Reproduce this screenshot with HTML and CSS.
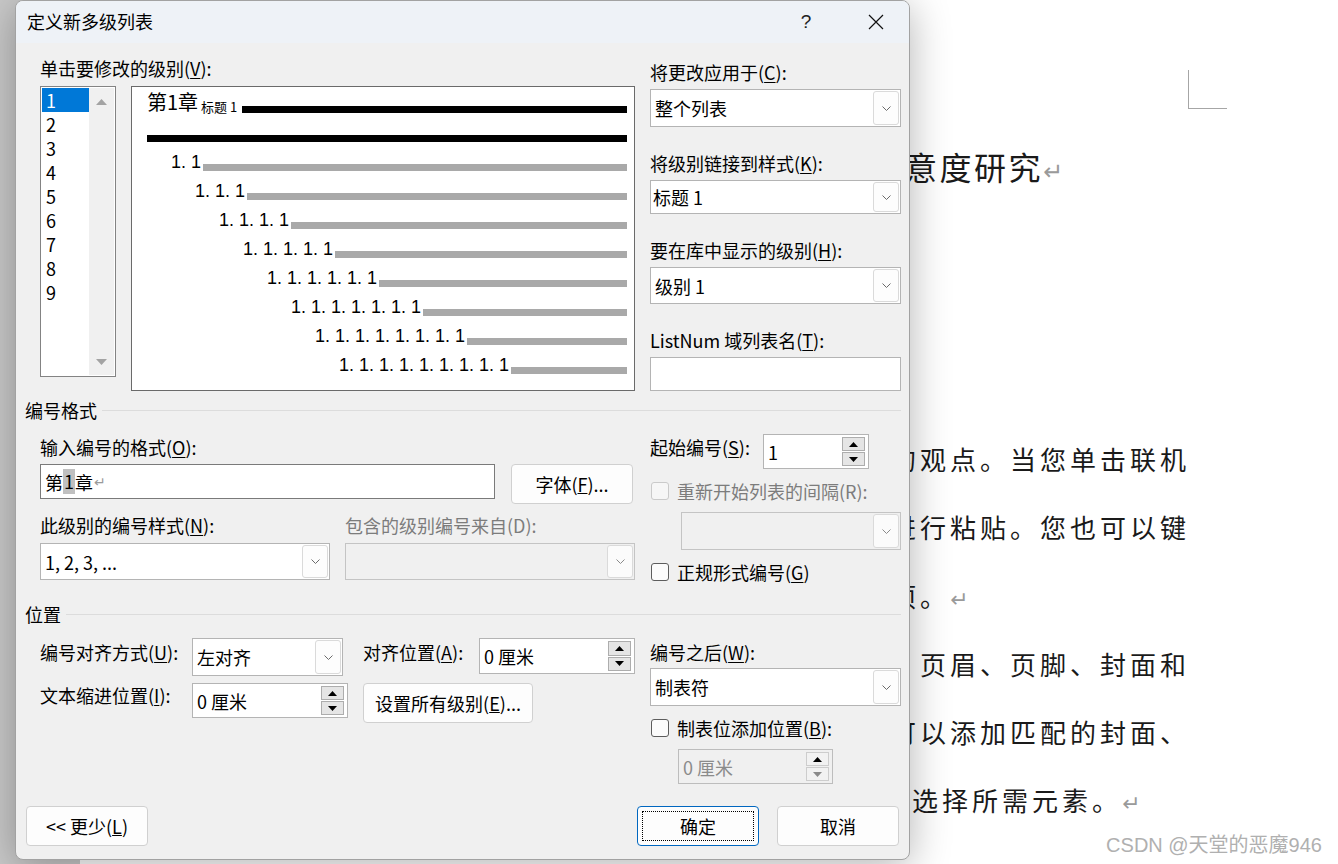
FILE: index.html
```html
<!DOCTYPE html>
<html lang="zh-CN">
<head>
<meta charset="utf-8">
<title>定义新多级列表</title>
<link rel="stylesheet" href="styles.css">
</head>
<body>
<div class="word">
  <div class="canvas"></div>
  <div class="page">
    <div class="corner"></div>
    <div class="doc-title">意度研究<span class="pilcrow">↵</span></div>
    <div class="doc-lines">
      <div class="doc-line">的观点。当您单击联机</div>
      <div class="doc-line">进行粘贴。您也可以键</div>
      <div class="doc-line">项。<span class="pilcrow">↵</span></div>
      <div class="doc-line">，页眉、页脚、封面和</div>
      <div class="doc-line">可以添加匹配的封面、</div>
      <div class="doc-line shift">选择所需元素。<span class="pilcrow">↵</span></div>
    </div>
  </div>
</div>
<div class="watermark">CSDN @天堂的恶魔946</div>

<div class="dialog">
  <div class="titlebar">
    <span class="title">定义新多级列表</span>
    <span class="tb-btn help">?</span>
    <span class="tb-btn close"><svg width="16" height="16" viewBox="0 0 16 16"><path d="M1 1 L15 15 M15 1 L1 15" stroke="#111" stroke-width="1.2" fill="none"/></svg></span>
  </div>
  <div class="dbody">
    <div class="grid top">
      <div class="lcol">
        <div class="lbl">单击要修改的级别(<u>V</u>):</div>
        <div class="levels-row">
          <div class="listbox">
            <div class="items">
              <div class="item sel">1</div>
              <div class="item">2</div>
              <div class="item">3</div>
              <div class="item">4</div>
              <div class="item">5</div>
              <div class="item">6</div>
              <div class="item">7</div>
              <div class="item">8</div>
              <div class="item">9</div>
            </div>
            <div class="vscroll">
              <svg width="11" height="6" viewBox="0 0 11 6"><polygon points="0,6 5.5,0 11,6" fill="#a3a3a3"/></svg>
              <svg width="11" height="6" viewBox="0 0 11 6"><polygon points="0,0 5.5,6 11,0" fill="#a3a3a3"/></svg>
            </div>
          </div>
          <div class="preview">
            <div class="prow"><span class="ch">第1章</span><span class="sm">标题 1</span><span class="bar black"></span></div>
            <div class="prow"><span class="bar black"></span></div>
            <div class="prow l2"><span class="num">1. 1</span><span class="bar gray"></span></div>
            <div class="prow l3"><span class="num">1. 1. 1</span><span class="bar gray"></span></div>
            <div class="prow l4"><span class="num">1. 1. 1. 1</span><span class="bar gray"></span></div>
            <div class="prow l5"><span class="num">1. 1. 1. 1. 1</span><span class="bar gray"></span></div>
            <div class="prow l6"><span class="num">1. 1. 1. 1. 1. 1</span><span class="bar gray"></span></div>
            <div class="prow l7"><span class="num">1. 1. 1. 1. 1. 1. 1</span><span class="bar gray"></span></div>
            <div class="prow l8"><span class="num">1. 1. 1. 1. 1. 1. 1. 1</span><span class="bar gray"></span></div>
            <div class="prow l9"><span class="num">1. 1. 1. 1. 1. 1. 1. 1. 1</span><span class="bar gray"></span></div>
          </div>
        </div>
      </div>
      <div class="rcol rtop">
        <div class="lbl">将更改应用于(<u>C</u>):</div>
        <div class="combo"><span class="txt">整个列表</span><span class="dd"><svg width="9" height="5" viewBox="0 0 9 5"><path d="M0.5 0.5 L4.5 4.5 L8.5 0.5" stroke="#6a6a6a" fill="none"/></svg></span></div>
        <div class="lbl gap">将级别链接到样式(<u>K</u>):</div>
        <div class="combo short edit"><span class="txt">标题 1</span><span class="dd"><svg width="9" height="5" viewBox="0 0 9 5"><path d="M0.5 0.5 L4.5 4.5 L8.5 0.5" stroke="#6a6a6a" fill="none"/></svg></span></div>
        <div class="lbl gap">要在库中显示的级别(<u>H</u>):</div>
        <div class="combo c37"><span class="txt">级别 1</span><span class="dd"><svg width="9" height="5" viewBox="0 0 9 5"><path d="M0.5 0.5 L4.5 4.5 L8.5 0.5" stroke="#6a6a6a" fill="none"/></svg></span></div>
        <div class="lbl gap">ListNum 域列表名(<u>T</u>):</div>
        <div class="textbox"></div>
      </div>
    </div>

    <div class="section sec1">编号格式</div>

    <div class="grid mid">
      <div class="lcol">
        <div class="lbl first">输入编号的格式(<u>O</u>):</div>
        <div class="row-input">
          <div class="fmt-input">第<span class="hl">1</span>章<span class="ret">↵</span></div>
          <button class="btn font-btn">字体(<u>F</u>)...</button>
        </div>
        <div class="row-labels">
          <div class="lbl w305">此级别的编号样式(<u>N</u>):</div>
          <div class="lbl dis">包含的级别编号来自(D):</div>
        </div>
        <div class="row-combos">
          <div class="combo w290 c37"><span class="txt">1, 2, 3, ...</span><span class="dd"><svg width="9" height="5" viewBox="0 0 9 5"><path d="M0.5 0.5 L4.5 4.5 L8.5 0.5" stroke="#6a6a6a" fill="none"/></svg></span></div>
          <div class="combo w290 c37 disabled"><span class="txt"></span><span class="dd"><svg width="9" height="5" viewBox="0 0 9 5"><path d="M0.5 0.5 L4.5 4.5 L8.5 0.5" stroke="#8a8a8a" fill="none"/></svg></span></div>
        </div>
      </div>
      <div class="rcol">
        <div class="spin-row">
          <div class="lbl start-lbl">起始编号(<u>S</u>):</div>
          <div class="spin start-spin"><span class="txt">1</span>
            <span class="arrows">
              <span class="abtn"><svg width="9" height="5" viewBox="0 0 9 5"><polygon points="0,5 4.5,0 9,5" fill="#000"/></svg></span>
              <span class="abtn"><svg width="9" height="5" viewBox="0 0 9 5"><polygon points="0,0 4.5,5 9,0" fill="#000"/></svg></span>
            </span>
          </div>
        </div>
        <div class="check-row"><span class="cb dis"></span><span class="lbl dis">重新开始列表的间隔(R):</span></div>
        <div class="combo restart disabled"><span class="txt"></span><span class="dd"><svg width="9" height="5" viewBox="0 0 9 5"><path d="M0.5 0.5 L4.5 4.5 L8.5 0.5" stroke="#8a8a8a" fill="none"/></svg></span></div>
        <div class="check-row"><span class="cb"></span><span class="lbl">正规形式编号(<u>G</u>)</span></div>
      </div>
    </div>

    <div class="section sec2">位置</div>

    <div class="grid bottom">
      <div class="lcol">
        <div class="pos-row1">
          <div class="lbl w152 nudge">编号对齐方式(<u>U</u>):</div>
          <div class="combo w151"><span class="txt">左对齐</span><span class="dd"><svg width="9" height="5" viewBox="0 0 9 5"><path d="M0.5 0.5 L4.5 4.5 L8.5 0.5" stroke="#6a6a6a" fill="none"/></svg></span></div>
          <div class="lbl align-lbl nudge">对齐位置(<u>A</u>):</div>
          <div class="spin w156 h36"><span class="txt">0 厘米</span>
            <span class="arrows">
              <span class="abtn"><svg width="9" height="5" viewBox="0 0 9 5"><polygon points="0,5 4.5,0 9,5" fill="#000"/></svg></span>
              <span class="abtn"><svg width="9" height="5" viewBox="0 0 9 5"><polygon points="0,0 4.5,5 9,0" fill="#000"/></svg></span>
            </span>
          </div>
        </div>
        <div class="pos-row2">
          <div class="lbl w152">文本缩进位置(<u>I</u>):</div>
          <div class="spin w156"><span class="txt">0 厘米</span>
            <span class="arrows">
              <span class="abtn"><svg width="9" height="5" viewBox="0 0 9 5"><polygon points="0,5 4.5,0 9,5" fill="#000"/></svg></span>
              <span class="abtn"><svg width="9" height="5" viewBox="0 0 9 5"><polygon points="0,0 4.5,5 9,0" fill="#000"/></svg></span>
            </span>
          </div>
          <button class="btn setall">设置所有级别(<u>E</u>)...</button>
        </div>
      </div>
      <div class="rcol">
        <div class="lbl nudge">编号之后(<u>W</u>):</div>
        <div class="combo after"><span class="txt">制表符</span><span class="dd"><svg width="9" height="5" viewBox="0 0 9 5"><path d="M0.5 0.5 L4.5 4.5 L8.5 0.5" stroke="#6a6a6a" fill="none"/></svg></span></div>
        <div class="check-row"><span class="cb"></span><span class="lbl">制表位添加位置(<u>B</u>):</span></div>
        <div class="spin tabpos disabled"><span class="txt">0 厘米</span>
          <span class="arrows">
            <span class="abtn"><svg width="9" height="5" viewBox="0 0 9 5"><polygon points="0,5 4.5,0 9,5" fill="#000"/></svg></span>
            <span class="abtn"><svg width="9" height="5" viewBox="0 0 9 5"><polygon points="0,0 4.5,5 9,0" fill="#8a8a8a"/></svg></span>
          </span>
        </div>
      </div>
    </div>

    <div class="btns">
      <button class="btn wide">&lt;&lt; 更少(<u>L</u>)</button>
      <button class="btn wide default push">确定</button>
      <button class="btn wide">取消</button>
    </div>
  </div>
</div>
</body>
</html>
```
FILE: styles.css
```css
* { box-sizing: border-box; }
html, body { margin: 0; padding: 0; }
body {
  width: 1338px;
  height: 864px;
  overflow: hidden;
  position: relative;
  background: #fff;
  color: #000;
  font-family: "Noto Sans CJK SC", sans-serif;
}

/* ---------- Word document in the background ---------- */
.word {
  display: grid;
  grid-template-columns: 80px 1fr;
  height: 864px;
}
.canvas { background: #c9c9c9; }
.page { background: #fff; padding-top: 70px; }
.corner {
  margin-left: 1108px;
  width: 39px;
  height: 39px;
  border-left: 1px solid #a6a6a6;
  border-bottom: 1px solid #a6a6a6;
}
.doc-title {
  margin-top: 37px;
  margin-left: 825px;
  font-size: 32px;
  line-height: 40px;
  letter-spacing: 2.5px;
  color: #1a1a1a;
  white-space: nowrap;
}
.pilcrow {
  color: #9a9a9a;
  font-family: "DejaVu Sans", sans-serif;
  font-size: 24px;
  line-height: 0;
  letter-spacing: 0;
}
.doc-lines {
  margin-top: 239px;
  margin-left: 810px;
  font-size: 26px;
  line-height: 68.3px;
  letter-spacing: 4px;
  color: #1a1a1a;
  white-space: nowrap;
}
.doc-lines .pilcrow { font-size: 22px; }
.doc-line.shift { padding-left: 22px; }
.watermark {
  position: absolute;
  right: 16px;
  bottom: 7px;
  font-family: "Liberation Sans", "Noto Sans CJK SC", sans-serif;
  font-size: 20px;
  line-height: 24px;
  color: #b0b0b0;
}

/* ---------- Dialog window ---------- */
.dialog {
  position: absolute;
  left: 15px;
  top: 0;
  width: 895px;
  height: 860px;
  background: #f0f0f0;
  border: 1px solid #a2a2a2;
  border-radius: 8px;
  box-shadow: 0 6px 40px rgba(0, 0, 0, 0.3);
  overflow: hidden;
  display: flex;
  flex-direction: column;
}
.titlebar {
  height: 42px;
  flex: none;
  background: #eef2f7;
  display: flex;
  align-items: center;
  padding: 0 10px 0 11px;
}
.title { font-size: 18px; line-height: 24px; margin-top: -2px; }
.tb-btn {
  width: 46px;
  display: flex;
  justify-content: center;
  align-items: center;
}
.help {
  margin-left: auto;
  margin-right: 24px;
  font-family: "Liberation Sans", sans-serif;
  font-size: 19px;
  color: #222;
}

.dbody {
  flex: 1;
  padding: 13px 8px 0 9px;
  display: flex;
  flex-direction: column;
  font-size: 18px;
}
.grid {
  display: grid;
  grid-template-columns: 610px 251px;
  column-gap: 15px;
  align-items: start;
}
.lcol { padding-left: 15px; }
.rcol { display: flex; flex-direction: column; align-items: flex-start; }
.rcol > .combo, .rcol > .textbox { align-self: stretch; }

.lbl { font-size: 18px; line-height: 24px; white-space: nowrap; }
.lbl u { text-underline-offset: 2px; }
.lbl.dis { color: #7c7c7c; }

/* top area */
.levels-row { display: flex; gap: 15px; margin-top: 6px; align-items: flex-start; }
.listbox {
  width: 76px;
  height: 291px;
  border: 1px solid #838383;
  background: #fff;
  display: flex;
  padding: 1px;
}
.items { width: 47px; }
.item { height: 24px; line-height: 24px; padding-left: 4px; font-size: 18px; }
.item.sel { background: #0078d7; color: #fff; }
.vscroll {
  flex: 1;
  background: #f0f0f0;
  display: flex;
  flex-direction: column;
  justify-content: space-between;
  align-items: center;
  padding: 11px 0 10px;
}
.preview {
  width: 504px;
  height: 305px;
  border: 1px solid #6a6a6a;
  background: #fff;
  padding: 8px 7px 0 15px;
}
.prow { display: flex; align-items: flex-start; height: 29px; }
.bar { flex: 1; height: 7px; align-self: center; }
.bar.black { background: #000; }
.bar.gray { background: #a9a9a9; }
.ch { font-size: 20px; line-height: 20px; margin-top: -3px; white-space: nowrap; }
.sm { font-size: 13px; line-height: 13px; margin: 5px 0 0 3px; white-space: pre; }
.prow .sm + .bar { margin-left: 5px; }
.num {
  font-family: "Liberation Sans", sans-serif;
  font-size: 18px;
  line-height: 18px;
  margin-right: 2px;
  white-space: pre;
}
.l2 { padding-left: 24px; }
.l3 { padding-left: 48px; }
.l4 { padding-left: 72px; }
.l5 { padding-left: 96px; }
.l6 { padding-left: 120px; }
.l7 { padding-left: 144px; }
.l8 { padding-left: 168px; }
.l9 { padding-left: 192px; }

.rtop { padding-top: 4px; }
.rtop .lbl { margin-bottom: 5px; }
.rtop .lbl.gap { margin-top: 24px; }

/* combos */
.combo {
  height: 38px;
  background: #fff;
  border: 1px solid #b4b4b4;
  display: flex;
  align-items: center;
  padding: 1px 1px 1px 4px;
  font-size: 18px;
}
.combo.short { height: 34px; }
.combo.c37 { height: 37px; }
.combo.edit { padding-left: 2px; }
.combo .txt { flex: 1; white-space: nowrap; }
.combo .dd {
  width: 26px;
  align-self: stretch;
  border: 1px solid #dadada;
  border-radius: 3px;
  background: #fdfdfd;
  display: flex;
  align-items: center;
  justify-content: center;
}
.combo.disabled { background: #f0f0f0; border-color: #c4c4c4; }
.combo.disabled .dd { background: #fbfbfb; }
.textbox { height: 34px; background: #fff; border: 1px solid #b4b4b4; }

/* sections */
.section {
  display: flex;
  align-items: center;
  gap: 5px;
  font-size: 18px;
  line-height: 24px;
}
.section::after { content: ""; flex: 1; height: 1px; background: #dcdcdc; }
.sec1 { margin-top: 7px; }
.sec2 { margin-top: 18px; }

/* numbering format */
.mid { margin-top: 12px; }
.lbl.first { margin-top: 1px; }
.row-input { display: flex; gap: 16px; margin-top: 5px; align-items: flex-start; }
.fmt-input {
  width: 455px;
  height: 35px;
  background: #fff;
  border: 1px solid #7a7a7a;
  padding-left: 4px;
  display: flex;
  align-items: center;
  font-size: 18px;
}
.hl { background: #c0c0c0; line-height: 25px; padding: 0 1px; }
.ret { color: #9a9a9a; font-family: "DejaVu Sans", sans-serif; font-size: 14px; margin-left: 1px; }
.row-labels { display: flex; margin-top: 9px; }
.w305 { width: 305px; }
.row-combos { display: flex; gap: 15px; margin-top: 6px; }
.w290 { width: 290px; }

.btn {
  font-family: "Noto Sans CJK SC", sans-serif;
  font-size: 18px;
  color: #000;
  background: #fdfdfd;
  border: 1px solid #d0d0d0;
  border-radius: 4px;
  padding: 0;
  height: 40px;
  position: relative;
}
.font-btn { width: 122px; }

.spin-row { display: flex; align-items: flex-start; }
.start-lbl { width: 113px; margin-top: 1px; }
.spin {
  display: flex;
  align-items: center;
  background: #fff;
  border: 1px solid #b4b4b4;
  padding: 2px 3px 2px 4px;
  height: 35px;
  font-size: 18px;
}
.spin .txt { flex: 1; white-space: nowrap; }
.spin .arrows { display: flex; flex-direction: column; width: 23px; align-self: stretch; gap: 1px; }
.abtn {
  flex: 1;
  background: #e5e5e5;
  border: 1px solid #adadad;
  display: flex;
  align-items: center;
  justify-content: center;
}
.start-spin { width: 106px; }
.spin.disabled { background: #f0f0f0; border-color: #bdbdbd; color: #8b8b8b; }
.spin.disabled .abtn { background: #f2f2f2; border-color: #cdcdcd; }

.check-row { display: flex; align-items: center; gap: 8px; margin-top: 10px; padding-left: 1px; height: 24px; }
.cb {
  width: 18px;
  height: 18px;
  border: 1px solid #5c5c5c;
  border-radius: 3px;
  background: #fbfbfb;
  flex: none;
}
.cb.dis { border-color: #cacaca; background: #f6f6f6; }
.combo.restart { margin: 9px 0 0 31px; width: 220px; align-self: flex-start; }

/* position */
.bottom { margin-top: 12px; }
.pos-row1 { display: flex; align-items: flex-start; }
.pos-row2 { display: flex; align-items: flex-start; margin-top: 7px; }
.w152 { width: 152px; }
.nudge { margin-top: 2px; }
.w151 { width: 151px; }
.align-lbl { margin-left: 20px; width: 116px; }
.w156 { width: 156px; }
.h36 { height: 36px; }
.setall { width: 170px; margin-left: 15px; }
.combo.after { margin-top: 4px; }
.spin.tabpos { width: 155px; margin: 9px 0 0 28px; }

/* bottom buttons */
.btns { display: flex; gap: 18px; margin-top: 22px; padding: 0 2px 0 1px; }
.btn.wide { width: 122px; }
.push { margin-left: auto; }
.btn.default { border-color: #0067c0; }
.btn.default::after {
  content: "";
  position: absolute;
  inset: 4px;
  border: 1px dotted #000;
}
```
